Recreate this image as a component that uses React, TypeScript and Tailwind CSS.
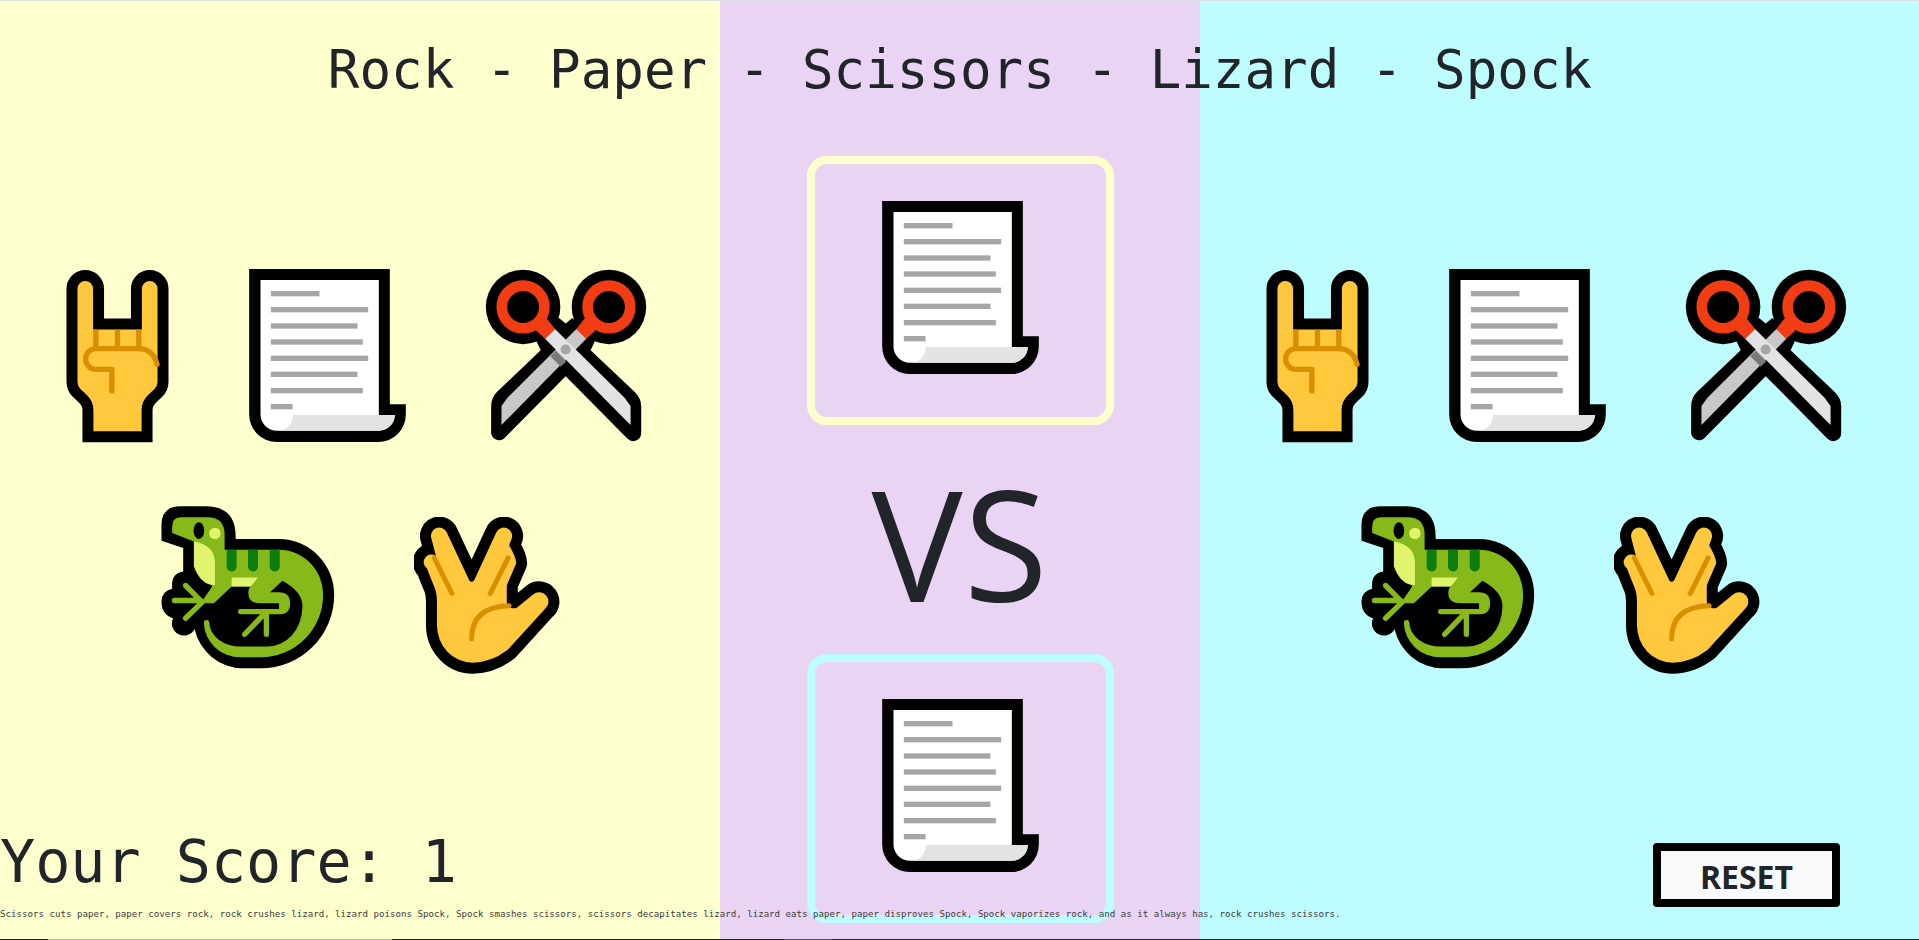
import React from 'react';

const SKIN = '#FFC83D';
const SKIN_LINE = '#D99000';

function RockIcon() {
  return (
    <svg viewBox="78 86 310 522" className="w-[103px] h-[174px] shrink-0">
      <path
        d="M144 590V510Q144 490 128 475L110 458Q96 444 96 425V145A40 40 0 0 1 176 145V251H290V145A40 40 0 0 1 370 145V425Q370 444 356 458L338 475Q322 490 322 510V590Z"
        fill={SKIN}
        stroke="#000"
        strokeWidth="33"
      />
      <g fill="none" stroke={SKIN_LINE} strokeWidth="16" strokeLinecap="round">
        <path d="M168 268V322M233 268V322M297 268V322" strokeLinecap="butt" />
        <path d="M352 372Q340 325 295 325H168A31 31 0 0 0 168 387H216V452" strokeLinejoin="round" />
      </g>
    </svg>
  );
}

function PaperIcon() {
  const lines = [
    [250, 146],
    [298, 292],
    [347, 260],
    [395, 276],
    [444, 292],
    [492, 260],
    [541, 276],
    [589, 65],
  ];
  return (
    <svg viewBox="304 184 470 519" className="w-[157px] h-[173px] shrink-0">
      <path d="M304 184H726V590H774V620A83 83 0 0 1 691 703H387A83 83 0 0 1 304 620Z" fill="#000" />
      <path d="M338 217H693V622H741A48 48 0 0 1 693 669H387A49 49 0 0 1 338 620Z" fill="#fff" />
      <path d="M435 622H741A48 48 0 0 1 693 669H395A45 45 0 0 0 435 622Z" fill="#E3E3E3" />
      {lines.map(([y, w]) => (
        <rect key={y} x="369" y={y} width={w} height="16" fill="#A6A6A6" />
      ))}
    </svg>
  );
}

function ScissorsIcon() {
  return (
    <svg viewBox="78 58 486 520" className="w-[162px] h-[173px] shrink-0">
      <path
        d="M96 470Q96 445 114 427L245 302L230 270L300 205L320 222L340 205L410 270L395 302L527 427Q547 447 547 470V552A24 24 0 0 1 506 568L320 380L134 568A24 24 0 0 1 96 552Z"
        fill="#000"
      />
      <circle cx="192" cy="172" r="112" fill="#000" />
      <circle cx="450" cy="172" r="112" fill="#000" />
      <circle cx="192" cy="172" r="64" fill="#000" stroke="#F23C14" strokeWidth="32" />
      <circle cx="450" cy="172" r="64" fill="#000" stroke="#F23C14" strokeWidth="32" />
      <path d="M228 240L262 205L288 238L258 268Z" fill="#F23C14" />
      <path d="M412 240L378 205L352 238L382 268Z" fill="#F23C14" />
      <path d="M352 238L382 268L127 527V470L145 445Z" fill="#C8C8C8" />
      <path d="M290 303L322 335L305 352L274 320Z" fill="#7A7A7A" />
      <path d="M288 238L258 268L515 527V470L497 445Z" fill="#E3E3E3" />
      <circle cx="320" cy="300" r="15" fill="#A6A6A6" />
    </svg>
  );
}

function LizardIcon() {
  return (
    <svg viewBox="32 44 520 488" className="w-[174px] h-[163px] shrink-0">
      <path
        d="M33 148V100Q33 45 90 45H165Q255 45 255 135V143H385A165 167 0 0 1 550 310A220 220 0 0 1 330 530H275A150 150 0 0 1 132 412A34 34 0 0 1 68 380Q33 370 33 330Q33 300 65 292Q60 245 98 240V170Z"
        fill="#000"
      />
      <path
        d="M65 125V105Q65 78 92 78H170Q222 78 222 130V175H385A132 135 0 0 1 517 310A187 187 0 0 1 330 497H270A110 105 0 0 1 160 395A8 8 0 0 1 176 392A95 73 0 0 0 270 465H350A105 120 0 0 0 455 345Q455 300 395 268L358 302H385Q418 302 418 335Q418 368 388 368H270A8 8 0 0 1 270 352H385V335H330Q293 335 293 305Q293 290 300 285H243L190 335H150L185 285L130 150Z"
        fill="#88B91A"
      />
      <path d="M130 150Q190 160 193 210V282Q150 280 130 225Z" fill="#E1F36F" />
      <path d="M243 258H322L300 285H243Z" fill="#E1F36F" />
      <path
        d="M228 175H258V225A15 15 0 0 1 228 225ZM292 175H322V225A15 15 0 0 1 292 225ZM357 175H387V225A15 15 0 0 1 357 225Z"
        fill="#0E7D0E"
      />
      <g stroke="#88B91A" strokeWidth="16" strokeLinecap="round" fill="none">
        <path d="M72 327H150M105 282L150 327M105 380L155 332" />
        <path d="M282 428L340 368M347 428V368" />
      </g>
      <ellipse cx="145" cy="118" rx="16" ry="25" fill="#000" />
      <circle cx="193" cy="126" r="17" fill="#E1F36F" />
    </svg>
  );
}

function SpockIcon() {
  return (
    <svg viewBox="40 45 440 472" className="w-[147px] h-[157px] shrink-0">
      <path
        d="M92 112A25 25 0 0 1 138 92L205 235Q212 245 220 235L286 92A25 25 0 0 1 332 112L325 130Q348 170 346 185L318 250V300Q320 325 348 318L398 277A28 28 0 0 1 432 322L320 445Q270 483 215 483A107 113 0 0 1 108 370V300Q108 270 98 250L78 200A22 22 0 0 1 105 162Z"
        fill={SKIN}
        stroke="#000"
        strokeWidth="66"
        strokeLinejoin="round"
        paintOrder="stroke"
      />
      <g fill="none" stroke={SKIN_LINE} strokeWidth="15" strokeLinecap="round">
        <path d="M100 168L153 275M322 168L268 275" />
        <path d="M212 412Q212 315 325 312" />
      </g>
    </svg>
  );
}

function Picker() {
  return (
    <div className="flex flex-col pt-[268px] gap-[63px]">
      <div className="flex items-start pl-[66px]">
        <RockIcon />
        <div className="ml-[80px]">
          <PaperIcon />
        </div>
        <div className="ml-[79px]">
          <ScissorsIcon />
        </div>
      </div>
      <div className="flex items-start pl-[161px] gap-[79px]">
        <LizardIcon />
        <div className="mt-[11px]">
          <SpockIcon />
        </div>
      </div>
    </div>
  );
}

function ChoiceBox({ border }: { border: string }) {
  return (
    <div className={`w-[307px] h-[269px] shrink-0 border-[8px] rounded-[20px] flex justify-center pt-[37px] ${border}`}>
      <PaperIcon />
    </div>
  );
}

export default function App() {
  return (
    <div className="relative w-[1919px] h-[940px] overflow-hidden text-[#212529] font-['Open_Sans',sans-serif]">
      <div className="flex h-full border-t border-[#DEE2E6]">
        <div className="w-[720px] shrink-0 bg-[#FDFFCC]">
          <Picker />
        </div>

        <div className="w-[480px] shrink-0 bg-[#E9D5F3] flex flex-col items-center pt-[155px]">
          <ChoiceBox border="border-[#FDFFCC]" />
          <div className="h-[229px] pt-[6px] flex items-center justify-center text-[153px] tracking-[1px] leading-none">VS</div>
          <ChoiceBox border="border-[#BDFDFE]" />
        </div>

        <div className="flex-1 bg-[#BDFDFE] relative">
          <Picker />
          <button className="absolute left-[453px] top-[842px] w-[187px] h-[64px] bg-[#F8F9FA] border-[8px] border-black rounded-[4px] pt-1 text-[32px] font-bold leading-none text-[#212529]">
            RESET
          </button>
        </div>
      </div>

      <h1 className="absolute left-[1px] right-0 top-[39px] text-center font-['DejaVu_Sans_Mono',monospace] text-[52.5px] leading-[62px] font-normal whitespace-nowrap">
        Rock - Paper - Scissors - Lizard - Spock
      </h1>
      <div className="absolute left-0 top-[827px] font-['DejaVu_Sans_Mono',monospace] text-[58.4px] leading-[70px]">
        Your Score: 1
      </div>
      <p className="absolute left-0 top-[908px] font-['DejaVu_Sans_Mono',monospace] text-[9.13px] leading-[12px] whitespace-nowrap text-[#3a3d40]">
        Scissors cuts paper, paper covers rock, rock crushes lizard, lizard poisons Spock, Spock smashes scissors, scissors decapitates lizard, lizard eats paper, paper disproves Spock, Spock vaporizes rock, and as it always has, rock crushes scissors.
      </p>

      {/* thin dark strip along the very bottom of the capture */}
      <div className="absolute left-0 right-0 bottom-0 h-px flex">
        <div className="w-[48px] bg-[#24231f]" />
        <div className="w-[344px] bg-[#B8B8B4]" />
        <div className="w-[392px] bg-[#26241e]" />
        <div className="w-[48px] bg-[#5a4f62]" />
        <div className="w-[368px] bg-[#2e2838]" />
        <div className="flex-1 bg-[#1a2d2d]" />
      </div>
    </div>
  );
}
